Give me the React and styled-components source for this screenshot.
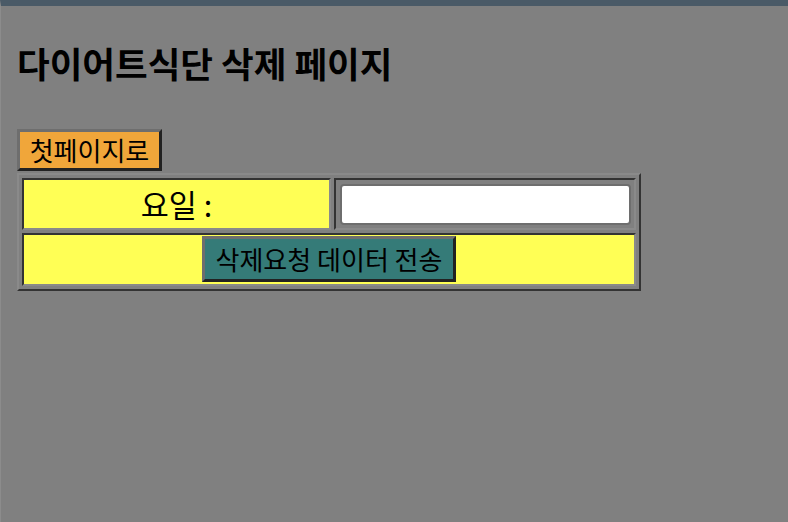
import styled, { createGlobalStyle } from "styled-components";

const GlobalStyle = createGlobalStyle`
  html, body {
    margin: 0;
    padding: 0;
  }
  body {
    background: #808080;
    color: #000;
    font-family: "Noto Sans CJK KR", "Noto Sans", sans-serif;
  }
`;

const Page = styled.div`
  min-height: 522px;
  box-sizing: border-box;
  border-top: 6px solid #4a5a67;
  border-left: 1px solid #8c8c8c;
  padding: 0 16px;
`;

const Title = styled.h2`
  margin: 35px 0 45px;
  font-size: 35.5px;
  font-weight: 700;
  line-height: 43px;
`;

const RaisedButton = styled.button`
  display: ${(p) => (p.$block ? "block" : "inline-block")};
  box-sizing: border-box;
  width: ${(p) => p.$width}px;
  height: ${(p) => p.$height}px;
  padding: 0;
  border: 3px solid;
  border-color: #6e6e6e #222 #222 #6e6e6e;
  background: ${(p) => p.$bg};
  color: #000;
  font-family: inherit;
  font-size: 26px;
  line-height: 34px;
  text-align: center;
  vertical-align: top;
  white-space: nowrap;
  cursor: pointer;
`;

const FormTable = styled.table`
  margin-top: 2px;
  width: 624px;
  border-collapse: separate;
  border-spacing: 3px;
  border: 2px solid;
  border-color: #8a8a8a #333 #333 #8a8a8a;
`;

const Cell = styled.td`
  box-sizing: content-box;
  height: 48px;
  padding: ${(p) => p.$pad || "0"};
  border: 2px solid;
  border-color: #333 #8a8a8a #8a8a8a #333;
  background: ${(p) => (p.$yellow ? "#ffff55" : "transparent")};
  font-size: 30.5px;
  line-height: 40px;
  text-align: center;
  vertical-align: ${(p) => p.$valign || "middle"};
`;

const TextInput = styled.input`
  display: block;
  box-sizing: border-box;
  width: 291px;
  height: 41px;
  border: 2px solid #6e6e6e;
  border-radius: 4px;
  background: #fff;
  font-size: 20px;
  font-family: inherit;
`;

export default function App() {
  return (
    <>
      <GlobalStyle />
      <Page>
        <Title>다이어트식단 삭제 페이지</Title>
        <RaisedButton $block $width={145} $height={42} $bg="#f0a63a">
          첫페이지로
        </RaisedButton>
        <FormTable>
          <tbody>
            <tr>
              <Cell $yellow style={{ width: 305 }}>
                요일 :
              </Cell>
              <Cell $pad="0 3px 0 4px">
                <TextInput type="text" />
              </Cell>
            </tr>
            <tr>
              <Cell $yellow colSpan={2} $valign="top" $pad="1px 0 0">
                <RaisedButton $width={254} $height={46} $bg="#357b78">
                  삭제요청 데이터 전송
                </RaisedButton>
              </Cell>
            </tr>
          </tbody>
        </FormTable>
      </Page>
    </>
  );
}
